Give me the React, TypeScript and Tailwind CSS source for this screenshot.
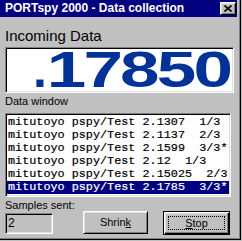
const rows = [
  "mitutoyo pspy/Test 2.1307  1/3",
  "mitutoyo pspy/Test 2.1137  2/3",
  "mitutoyo pspy/Test 2.1599  3/3*",
  "mitutoyo pspy/Test 2.12  1/3",
  "mitutoyo pspy/Test 2.15025  2/3",
  "mitutoyo pspy/Test 2.1785  3/3*",
];

const sunken =
  "border border-t-[#808080] border-l-[#808080] border-r-white border-b-white shadow-[inset_1px_1px_0_#000,inset_-1px_-1px_0_#dfdfdf]";
const raised =
  "border border-t-white border-l-white border-r-black border-b-black shadow-[inset_1px_1px_0_#dfdfdf,inset_-1px_-1px_0_#808080]";

export default function App() {
  const selected = rows.length - 1;

  return (
    <div className="w-[242px] h-[241px] bg-[#c0c0c0] overflow-hidden font-['Liberation_Sans',Arial,sans-serif] text-black">
      <div className="w-[241px] h-[240px] shadow-[inset_-1px_-1px_0_#000,inset_-2px_-2px_0_#808080]">
        {/* title bar */}
        <div className="flex w-[237px] h-[17px] items-center justify-between bg-[#000080] pl-[5px] pr-[1px]">
          <span className="text-[12px] font-bold leading-[17px] text-white whitespace-nowrap">
            PORTspy 2000 - Data collection
          </span>
          <div className={`flex w-[16px] h-[13px] items-center justify-center bg-[#c0c0c0] ${raised}`}>
            <svg width="8" height="7" viewBox="0 0 8 7" aria-hidden="true">
              <path d="M0.5 0.5 L7.5 6.5 M7.5 0.5 L0.5 6.5" stroke="#000" strokeWidth="1.6" fill="none" />
            </svg>
          </div>
        </div>

        <div className="pl-[5px]">
          <div className="mt-[10px] text-[15px] leading-[17px]">Incoming Data</div>

          {/* big readout */}
          <div className={`mt-[3px] flex w-[229px] h-[46px] justify-end bg-white pr-[3px] ${sunken}`}>
            <div className="flex h-[42px] items-baseline text-[50px] font-bold leading-[45px] text-[#003399]">
              <span className="mr-[4px]">.</span>
              <span className="ml-[50px] inline-block origin-right scale-x-[1.42] tracking-[-2px]">17850</span>
            </div>
          </div>

          <div className="mt-[2px] text-[11px] leading-[13px]">Data window</div>

          {/* list */}
          <div className={`mt-[5px] w-[226px] h-[84px] bg-white py-[1px] ${sunken}`}>
            <div className="px-[1px] pt-[1px]">
              {rows.map((r, i) => (
                <div
                  key={i}
                  className={`h-[13px] pl-[1px] font-['Liberation_Mono','Courier_New',monospace] text-[11.8px] leading-[13px] whitespace-pre [-webkit-text-stroke:0.2px_currentColor] ${
                    i === selected ? "bg-[#000080] text-white" : "text-black"
                  }`}
                >
                  {r}
                </div>
              ))}
            </div>
          </div>

          <div className="mt-[2px] text-[11px] leading-[13px]">Samples sent:</div>

          {/* bottom controls */}
          <div className="-mt-[1px] flex items-start">
            <div className={`mt-[2px] w-[48px] h-[21px] pl-[2px] text-[12px] leading-[19px] ${sunken}`}>2</div>
            <button
              className={`ml-[30px] w-[65px] h-[23px] text-[11px] leading-none bg-[#c0c0c0] ${raised}`}
            >
              Shrin<u className="underline-offset-1">k</u>
            </button>
            <button className="ml-[15px] w-[67px] h-[24px] border border-black bg-[#c0c0c0] p-0 shadow-[inset_1px_1px_0_#fff,inset_-1px_-1px_0_#000,inset_-2px_-2px_0_#808080,inset_2px_2px_0_#dfdfdf]">
              <div className="mx-[4px] my-[3px] flex h-[14px] items-center justify-center border border-dotted border-black text-[11px] leading-none">
                <span>
                  <u className="underline-offset-1">S</u>top
                </span>
              </div>
            </button>
          </div>
        </div>
      </div>
    </div>
  );
}
